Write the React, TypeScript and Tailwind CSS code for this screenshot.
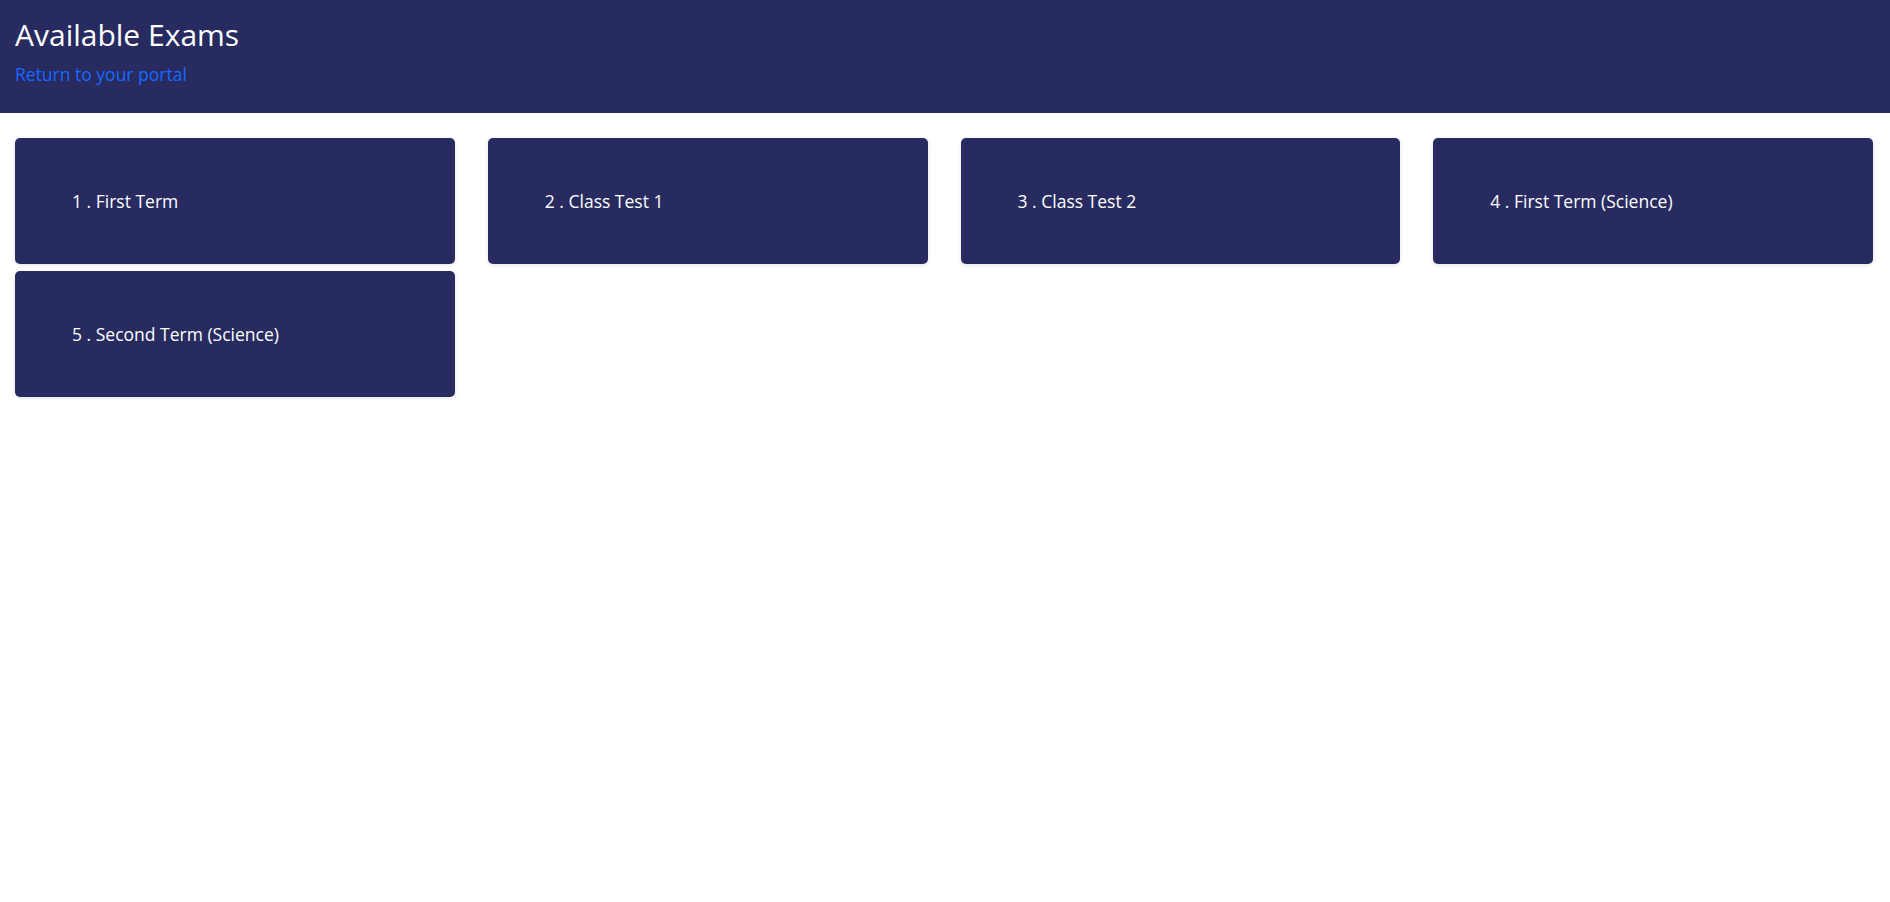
const exams = [
  "First Term",
  "Class Test 1",
  "Class Test 2",
  "First Term (Science)",
  "Second Term (Science)",
];

export default function App() {
  return (
    <div className="min-h-screen bg-white font-['Open_Sans',sans-serif]">
      <header className="h-[113px] bg-[#272b5f] px-[15px] pt-[17px]">
        <h1 className="text-[30px] leading-[1.2] font-normal text-white">Available Exams</h1>
        <a href="#" className="mt-[11px] block text-[17.5px] leading-[1.2] text-[#1769ff]">
          Return to your portal
        </a>
      </header>

      <main className="grid grid-cols-4 gap-x-[33px] gap-y-[7px] pt-[25px] pr-[17px] pl-[15px]">
        {exams.map((name, i) => (
          <div
            key={name}
            className="flex h-[126px] items-center rounded-[5px] bg-[#272b5f] pl-[57px] text-[17.5px] text-white shadow-[0_1px_4px_rgba(0,0,0,0.12)]"
          >
            {i + 1} . {name}
          </div>
        ))}
      </main>
    </div>
  );
}
